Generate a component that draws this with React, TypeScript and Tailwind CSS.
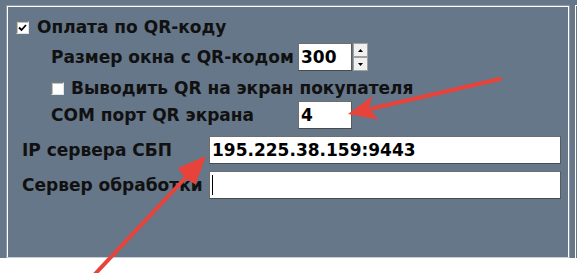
import React from "react";

const font = { fontFamily: '"DejaVu Sans", Verdana, sans-serif' };

function CheckBox({ checked }: { checked?: boolean }) {
  return (
    <div className="w-[13px] h-[13px] shrink-0 bg-white border border-t-[#7a7a7a] border-l-[#7a7a7a] border-r-[#e3e3e3] border-b-[#e3e3e3] shadow-[inset_1px_1px_0_#c0c0c0] flex items-center justify-center">
      {checked && (
        <svg width="9" height="9" viewBox="0 0 9 9">
          <path d="M1 4.5 L3.5 7 L8 2" stroke="#000" strokeWidth="1.8" fill="none" />
        </svg>
      )}
    </div>
  );
}

function Field({ value, w, cursor }: { value?: string; w: string; cursor?: boolean }) {
  return (
    <div
      className={`${w} h-[28px] bg-white border border-t-[#6e6e6e] border-l-[#6e6e6e] border-r-[#5a5a5a] border-b-[#4a4a4a] flex items-center pl-[2px] text-[17px] font-bold text-black`}
    >
      {value}
      {cursor && <div className="w-[1px] h-[20px] bg-black" />}
    </div>
  );
}

function Spinner() {
  return (
    <div className="flex flex-col ml-[1px] h-[28px]">
      <div className="w-[15px] h-[14px] bg-[#f0f0f0] border border-[#a0a0a0] flex items-center justify-center">
        <svg width="5" height="3" viewBox="0 0 5 3">
          <path d="M0 3 L2.5 0 L5 3 Z" fill="#000" />
        </svg>
      </div>
      <div className="w-[15px] h-[14px] bg-[#f0f0f0] border border-[#a0a0a0] flex items-center justify-center">
        <svg width="5" height="3" viewBox="0 0 5 3">
          <path d="M0 0 L2.5 3 L5 0 Z" fill="#000" />
        </svg>
      </div>
    </div>
  );
}

export default function App() {
  return (
    <div className="relative w-[577px] h-[273px] bg-white overflow-hidden text-[#111] font-bold text-[17px] leading-none" style={font}>
      <div className="h-[258px] bg-[#667789] flex pt-[5px]">
        <div className="ml-[6px] w-[564px] h-[253px] border-l border-t border-r border-[#8d98a4] border-b border-b-[#c8ced4] shadow-[inset_1px_1px_0_#ffffff,inset_-1px_0_0_#ffffff] flex flex-col">
          <div className="mt-[13px] h-[17px] flex items-center pl-[9px]">
            <CheckBox checked />
            <span className="ml-[8px] whitespace-nowrap">Оплата по QR-коду</span>
          </div>
          <div className="mt-[7px] h-[28px] flex items-center pl-[44px]">
            <span className="w-[247px] whitespace-nowrap">Размер окна с QR-кодом</span>
            <Field value="300" w="w-[54px]" />
            <Spinner />
          </div>
          <div className="mt-[8px] h-[18px] flex items-center pl-[44px]">
            <CheckBox />
            <span className="ml-[7px] whitespace-nowrap">Выводить QR на экран покупателя</span>
          </div>
          <div className="mt-[4px] h-[28px] flex items-center pl-[44px]">
            <span className="w-[247px] whitespace-nowrap">COM порт QR экрана</span>
            <Field value="4" w="w-[54px]" />
          </div>
          <div className="mt-[7px] h-[28px] flex items-center pl-[15px]">
            <span className="w-[187px] whitespace-nowrap">IP сервера СБП</span>
            <Field value="195.225.38.159:9443" w="w-[352px]" />
          </div>
          <div className="mt-[7px] h-[28px] flex items-center pl-[15px]">
            <span className="w-[187px] whitespace-nowrap">Сервер обработки</span>
            <Field w="w-[352px]" cursor />
          </div>
        </div>
        <div className="ml-[5px] w-[2px] h-[253px] border-l border-white border-t" />
      </div>
      <svg className="absolute inset-0 pointer-events-none" width="577" height="273" viewBox="0 0 577 273">
        <g fill="#e8433a" stroke="none">
          <line x1="500" y1="79" x2="372" y2="108.5" stroke="#e8433a" strokeWidth="4" strokeLinecap="round" />
          <polygon points="348,114 372.6,96 369,108 378,119.4" />
          <line x1="95" y1="274" x2="190" y2="173" stroke="#e8433a" strokeWidth="4" strokeLinecap="round" />
          <polygon points="206,156 195.4,184.5 185,178 178,167.9" />
        </g>
      </svg>
    </div>
  );
}
